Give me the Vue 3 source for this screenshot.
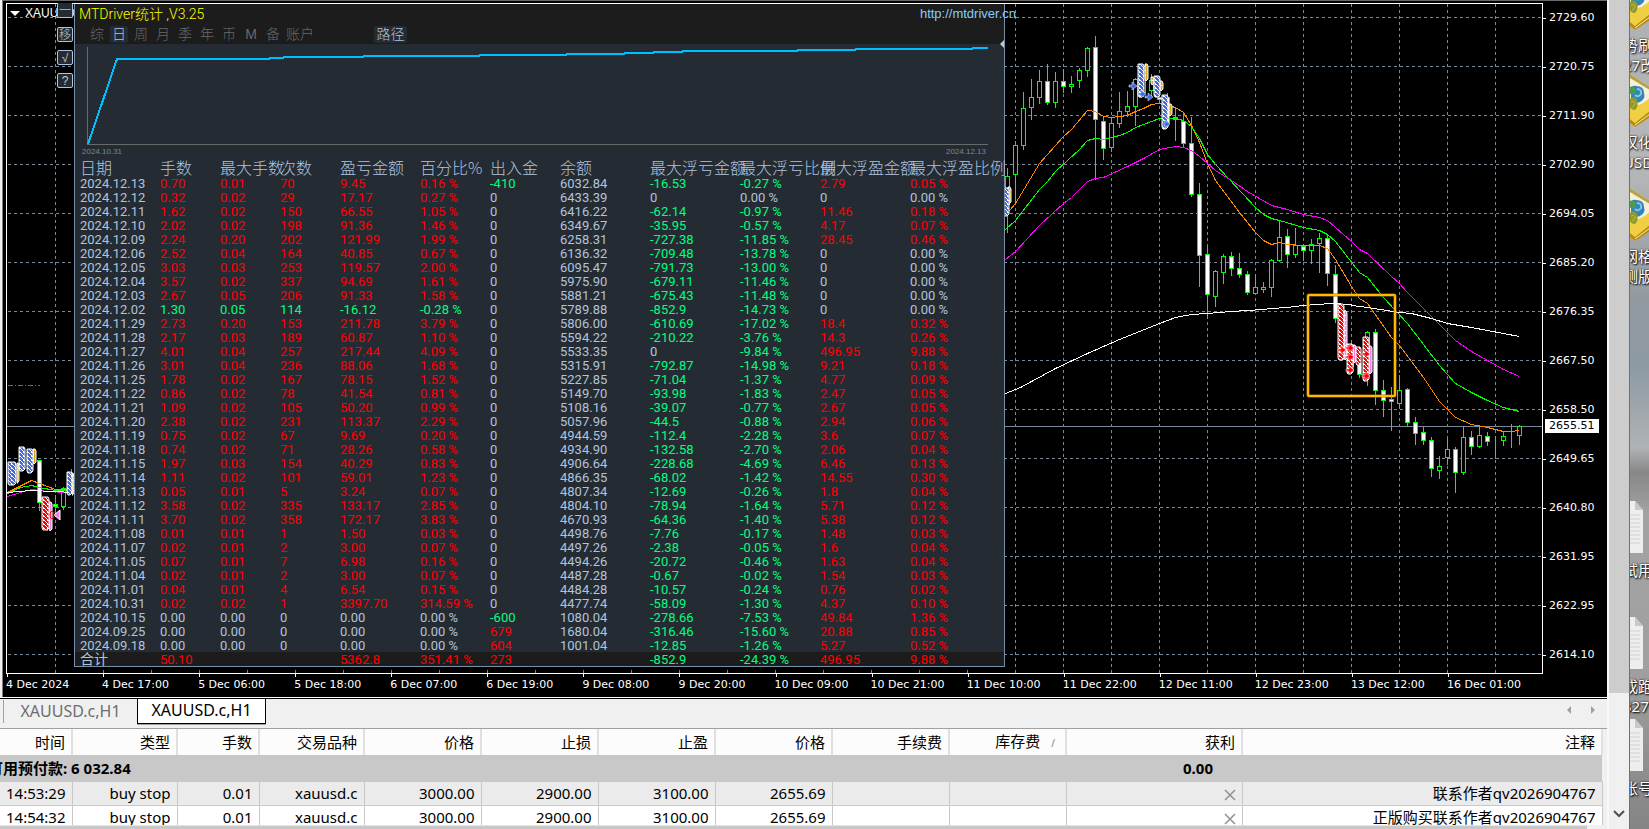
<script setup>
const headers = ['日期', '手数', '最大手数', '次数', '盈亏金额', '百分比%', '出入金', '余额', '最大浮亏金额', '最大浮亏比例', '最大浮盈金额', '最大浮盈比例']
const rows = `2024.12.13|0.70|0.01|70|9.45|0.16|-410|6032.84|-16.53|-0.27|2.79|0.05
2024.12.12|0.32|0.02|29|17.17|0.27|0|6433.39|0|0.00|0|0.00
2024.12.11|1.62|0.02|150|66.55|1.05|0|6416.22|-62.14|-0.97|11.46|0.18
2024.12.10|2.02|0.02|198|91.36|1.46|0|6349.67|-35.95|-0.57|4.17|0.07
2024.12.09|2.24|0.20|202|121.99|1.99|0|6258.31|-727.38|-11.85|28.45|0.46
2024.12.06|2.52|0.04|164|40.85|0.67|0|6136.32|-709.48|-13.78|0|0.00
2024.12.05|3.03|0.03|253|119.57|2.00|0|6095.47|-791.73|-13.00|0|0.00
2024.12.04|3.57|0.02|337|94.69|1.61|0|5975.90|-679.11|-11.46|0|0.00
2024.12.03|2.67|0.05|206|91.33|1.58|0|5881.21|-675.43|-11.48|0|0.00
2024.12.02|1.30|0.05|114|-16.12|-0.28|0|5789.88|-852.9|-14.73|0|0.00
2024.11.29|2.73|0.20|153|211.78|3.79|0|5806.00|-610.69|-17.02|18.4|0.32
2024.11.28|2.17|0.03|189|60.87|1.10|0|5594.22|-210.22|-3.76|14.3|0.26
2024.11.27|4.01|0.04|257|217.44|4.09|0|5533.35|0|-9.84|496.95|9.88
2024.11.26|3.01|0.04|236|88.06|1.68|0|5315.91|-792.87|-14.98|9.21|0.18
2024.11.25|1.78|0.02|167|78.15|1.52|0|5227.85|-71.04|-1.37|4.77|0.09
2024.11.22|0.86|0.02|78|41.54|0.81|0|5149.70|-93.98|-1.83|2.47|0.05
2024.11.21|1.09|0.02|105|50.20|0.99|0|5108.16|-39.07|-0.77|2.67|0.05
2024.11.20|2.38|0.02|231|113.37|2.29|0|5057.96|-44.5|-0.88|2.94|0.06
2024.11.19|0.75|0.02|67|9.69|0.20|0|4944.59|-112.4|-2.28|3.6|0.07
2024.11.18|0.74|0.02|71|28.26|0.58|0|4934.90|-132.58|-2.70|2.06|0.04
2024.11.15|1.97|0.03|154|40.29|0.83|0|4906.64|-228.68|-4.69|6.46|0.13
2024.11.14|1.11|0.02|101|59.01|1.23|0|4866.35|-68.02|-1.42|14.55|0.30
2024.11.13|0.05|0.01|5|3.24|0.07|0|4807.34|-12.69|-0.26|1.8|0.04
2024.11.12|3.58|0.02|335|133.17|2.85|0|4804.10|-78.94|-1.64|5.71|0.12
2024.11.11|3.70|0.02|358|172.17|3.83|0|4670.93|-64.36|-1.40|5.38|0.12
2024.11.08|0.01|0.01|1|1.50|0.03|0|4498.76|-7.76|-0.17|1.48|0.03
2024.11.07|0.02|0.01|2|3.00|0.07|0|4497.26|-2.38|-0.05|1.6|0.04
2024.11.05|0.07|0.01|7|6.98|0.16|0|4494.26|-20.72|-0.46|1.63|0.04
2024.11.04|0.02|0.01|2|3.00|0.07|0|4487.28|-0.67|-0.02|1.54|0.03
2024.11.01|0.04|0.01|4|6.54|0.15|0|4484.28|-10.57|-0.24|0.76|0.02
2024.10.31|0.02|0.02|1|3397.70|314.59|0|4477.74|-58.09|-1.30|4.37|0.10
2024.10.15|0.00|0.00|0|0.00|0.00|-600|1080.04|-278.66|-7.53|49.84|1.36
2024.09.25|0.00|0.00|0|0.00|0.00|679|1680.04|-316.46|-15.60|20.88|0.85
2024.09.18|0.00|0.00|0|0.00|0.00|604|1001.04|-12.85|-1.26|5.27|0.52`.split('\n').map((line) => line.split('|'))
const totals = ['合计', '50.10', '', '', '5362.8', '351.41', '273', '', '-852.9', '-24.39', '496.95', '9.88']
const percentColumns = [5, 9, 11]
const sign = (v) => (Number(v) > 0 ? 'up' : Number(v) < 0 ? 'down' : '')
function tone(row, i) {
  if (i === 0 || i === 7) return ''
  return i <= 5 ? sign(row[4]) : sign(row[i])
}
const show = (v, i) => (v !== '' && percentColumns.includes(i) ? v + ' %' : v)

const periods = ['综', '日', '周', '月', '季', '年', '币', 'M', '备', '账户']
const tools = ['一', '移', '√', '?']

const prices = ['2729.60', '2720.75', '2711.90', '2702.90', '2694.05', '2685.20', '2676.35', '2667.50', '2658.50', '2649.65', '2640.80', '2631.95', '2622.95', '2614.10']
const times = ['4 Dec 2024', '4 Dec 17:00', '5 Dec 06:00', '5 Dec 18:00', '6 Dec 07:00', '6 Dec 19:00', '9 Dec 08:00', '9 Dec 20:00', '10 Dec 09:00', '10 Dec 21:00', '11 Dec 10:00', '11 Dec 22:00', '12 Dec 11:00', '12 Dec 23:00', '13 Dec 12:00', '16 Dec 01:00']
const gridX = Array.from({ length: 31 }, (_, k) => 55 + 48 * k)
const gridY = Array.from({ length: 14 }, (_, k) => 17 + 49 * k)

// Series are stored in thirds of a pixel, relative to the origin of their block.
const third = (n, origin) => Math.round(n / 3 + origin)
const bars = (ox, oy, list) => list.map(([x, hi, lo, top, bottom, solid]) => {
  const cx = Math.floor(x / 3 + ox)
  const y = third(top, oy)
  return { cx: cx + 0.5, hi: third(hi, oy), lo: third(lo, oy), y, h: Math.max(0, third(bottom, oy) - y - 1), solid: !!solid }
})
const candles = [
  ...bars(1000, 0, [
    [22, 504, 698, 528, 616], [46, 424, 605, 436, 526], [70, 276, 450, 325, 437], [94, 237, 360, 292, 323],
    [118, 210, 312, 244, 293], [142, 192, 314, 244, 308, 1], [166, 216, 324, 244, 308], [190, 207, 280, 244, 260, 1],
    [214, 228, 279, 253, 260], [238, 205, 264, 211, 242], [262, 140, 231, 145, 212], [286, 108, 540, 142, 361, 1],
    [310, 348, 480, 363, 446, 1], [334, 350, 456, 370, 443], [358, 276, 384, 334, 371], [382, 272, 350, 319, 335],
    [406, 235, 378, 238, 320], [430, 200, 290, 210, 280], [454, 222, 290, 240, 272], [478, 240, 308, 290, 300, 1],
    [502, 280, 384, 290, 370, 1], [526, 322, 423, 352, 361, 1], [550, 337, 443, 363, 431, 1], [574, 352, 591, 430, 584, 1],
    [598, 549, 861, 583, 767, 1], [622, 737, 957, 763, 884, 1], [646, 810, 921, 814, 890], [670, 762, 852, 769, 818],
    [694, 755, 828, 769, 806, 1], [718, 759, 834, 804, 824, 1], [742, 814, 885, 822, 878, 1], [766, 822, 882, 862, 881],
    [790, 846, 879, 862, 869], [814, 777, 891, 781, 863], [838, 660, 785, 712, 782], [862, 686, 804, 709, 764, 1],
    [886, 684, 775, 735, 764], [910, 732, 783, 737, 754, 1], [934, 717, 793, 733, 752], [958, 699, 820, 715, 733],
    [982, 702, 858, 715, 821, 1]
  ]),
  ...bars(1280, 180, [
    [166, 255, 428, 283, 416, 1], [190, 374, 540, 390, 530, 1], [214, 480, 580, 500, 560], [238, 545, 595, 550, 584, 1],
    [262, 453, 618, 457, 560], [286, 447, 675, 457, 632, 1], [310, 600, 711, 631, 662, 1], [334, 620, 753, 658, 665, 1],
    [358, 586, 683, 631, 671], [382, 624, 738, 628, 728, 1], [406, 711, 795, 727, 761, 1], [430, 741, 796, 757, 782, 1],
    [454, 771, 891, 781, 866, 1], [478, 828, 897, 859, 872], [502, 777, 856, 808, 833], [526, 800, 939, 808, 878, 1],
    [550, 738, 885, 772, 878], [574, 753, 825, 771, 800, 1], [598, 737, 803, 766, 801], [622, 757, 797, 769, 785, 1],
    [646, 769, 838, 784, 784], [670, 752, 797, 769, 784], [694, 732, 803, 769, 769], [718, 735, 795, 739, 767]
  ]),
  ...bars(0, 400, [[118, 180, 332, 181, 310, 1], [166, 284, 352, 313, 320, 1], [190, 262, 330, 265, 322], [214, 207, 270, 230, 260], [142, 300, 392, 310, 360, 1]])
]
const pts = (ox, oy, flat) => {
  const out = []
  for (let i = 0; i < flat.length; i += 2) out.push(`${third(flat[i], ox)}.5,${third(flat[i + 1], oy)}.5`)
  return out.join(' ')
}
const averages = [
  { color: '#ff8c00', points: pts(1000, 0, [14, 645, 46, 608, 118, 490, 190, 407, 214, 387, 262, 329, 286, 333, 310, 347, 334, 352, 382, 346, 406, 332, 430, 325, 454, 312, 478, 310, 526, 322, 550, 337, 574, 375, 598, 425, 622, 490, 646, 540, 718, 635, 766, 697, 790, 720, 814, 731, 838, 727, 862, 733, 910, 736, 958, 734]) + ' ' + pts(1280, 180, [142, 205, 166, 237, 214, 318, 238, 354, 262, 370, 334, 472, 358, 495, 430, 590, 478, 663, 502, 686, 526, 711, 574, 732, 622, 742, 670, 752, 694, 754, 718, 750]) },
  { color: '#00ff00', points: pts(1000, 0, [14, 687, 46, 660, 118, 568, 142, 543, 166, 514, 238, 446, 262, 419, 286, 415, 310, 418, 334, 412, 358, 406, 382, 397, 406, 382, 454, 363, 478, 355, 526, 355, 550, 359, 574, 377, 598, 414, 622, 462, 646, 493, 766, 620, 790, 641, 814, 654, 838, 661, 910, 681, 958, 690]) + ' ' + pts(1280, 180, [142, 162, 166, 184, 238, 277, 262, 291, 310, 350, 382, 430, 430, 491, 478, 555, 526, 608, 574, 636, 622, 659, 670, 682, 694, 687, 718, 693]) },
  { color: '#ff00ff', points: pts(1000, 0, [14, 776, 46, 754, 118, 676, 190, 608, 214, 590, 262, 544, 286, 535, 310, 530, 382, 499, 430, 473, 478, 448, 526, 438, 550, 440, 574, 450, 598, 469, 622, 490, 646, 510, 694, 540, 742, 573, 814, 616, 862, 627, 910, 643, 958, 652]) + ' ' + pts(1280, 180, [142, 121, 214, 182, 238, 206, 262, 219, 334, 288, 358, 308, 382, 335, 454, 408, 526, 481, 574, 512, 622, 541, 670, 566, 718, 589]) },
  { color: '#ffffff', points: pts(1000, 0, [14, 1178, 60, 1160, 165, 1105, 262, 1060, 358, 1018, 478, 970, 526, 952, 574, 941, 622, 938, 694, 932, 790, 928, 814, 923, 862, 920, 910, 915, 990, 910, 1050, 912]) + ' ' + pts(1280, 180, [215, 376, 262, 380, 358, 395, 394, 399, 454, 415, 502, 428, 574, 441, 718, 467]) },
  { color: '#ff8c00', points: pts(0, 400, [22, 275, 94, 241, 118, 248, 166, 268, 222, 267]) },
  { color: '#00ff00', points: pts(0, 400, [22, 278, 60, 262, 94, 256, 118, 260, 166, 270, 222, 270]) },
  { color: '#ff00ff', points: pts(0, 400, [22, 287, 60, 275, 94, 268, 140, 274, 196, 276]) },
  { color: '#ffffff', points: pts(0, 400, [22, 276, 94, 270, 222, 276]) }
]
const mark = (ox, oy, kind, x1, y1, x2, y2) => ({ kind, x: third(x1, ox), y: third(y1, oy), w: third(x2 - x1, 0), h: third(y2 - y1, 0) })
const stacks = [
  mark(1000, 0, 'gold', 22, 561, 35, 612), mark(1000, 0, 'blue', 8, 565, 26, 650),
  mark(1000, 0, 'gold', 433, 193, 444, 245), mark(1000, 0, 'blue', 412, 192, 434, 292),
  mark(1000, 0, 'gold', 450, 232, 461, 255), mark(1000, 0, 'gold', 478, 243, 491, 272),
  mark(1000, 0, 'blue', 458, 229, 480, 292), mark(1000, 0, 'gold', 504, 313, 516, 350),
  mark(1000, 0, 'blue', 484, 284, 506, 385),
  mark(1280, 180, 'violet', 190, 394, 203, 540), mark(1280, 180, 'red', 172, 372, 193, 541),
  mark(1280, 180, 'violet', 216, 495, 228, 548), mark(1280, 180, 'red', 197, 493, 218, 583),
  mark(1280, 180, 'red', 224, 500, 242, 555), mark(1280, 180, 'violet', 264, 498, 276, 583),
  mark(1280, 180, 'red', 245, 472, 266, 605),
  mark(0, 400, 'gold', 48, 190, 58, 250), mark(0, 400, 'blue', 22, 185, 48, 255),
  mark(0, 400, 'blue', 54, 140, 75, 212), mark(0, 400, 'gold', 96, 148, 108, 192),
  mark(0, 400, 'blue', 78, 146, 98, 218), mark(0, 400, 'violet', 145, 306, 156, 392),
  mark(0, 400, 'red', 124, 292, 147, 392), mark(0, 400, 'gold', 214, 218, 224, 283), mark(0, 400, 'blue', 197, 215, 216, 283)
]
const tips = [
  { x: 1129, y: 86, color: '#4169e1' }, { x: 1145, y: 97, color: '#4169e1' },
  { x: 1138, y: 94, color: '#4169e1' }, { x: 1162, y: 124, color: '#4169e1' },
  { x: 1346, y: 348, color: '#ff0000' }, { x: 1346, y: 357, color: '#ff0000' }, { x: 1346, y: 370, color: '#ff0000' },
  { x: 1362, y: 354, color: '#ff0000' }, { x: 1362, y: 376, color: '#ff0000' }, { x: 1338, y: 350, color: '#ff0000' }
]

const orderHeads = ['时间', '类型', '手数', '交易品种', '价格', '止损', '止盈', '价格', '手续费', '库存费', '获利', '注释']
const orders = [
  ['14:53:29', 'buy stop', '0.01', 'xauusd.c', '3000.00', '2900.00', '3100.00', '2655.69', '', '', '×', '联系作者qv2026904767'],
  ['14:54:32', 'buy stop', '0.01', 'xauusd.c', '3000.00', '2900.00', '3100.00', '2655.69', '', '', '×', '正版购买联系作者qv2026904767']
]
const shortcuts = [
  { kind: 'book', lines: ['势刷', '27改'] },
  { kind: 'book', lines: ['汉化', 'USD'] },
  { kind: 'book', lines: ['网格', '测版'] },
  { kind: 'gap', lines: [] },
  { kind: 'doc', lines: ['试用'] },
  { kind: 'doc', lines: ['成跑', '327'] },
  { kind: 'doc', lines: ['账号'] }
]
</script>

<template>
  <div class="screen">
    <main class="terminal">
      <section class="chart">
        <div class="plot">
          <svg class="canvas" viewBox="7 4 1535 669" preserveAspectRatio="none" aria-label="XAUUSD.c H1">
            <defs>
              <pattern id="blue" width="4" height="4" patternUnits="userSpaceOnUse"><rect width="4" height="4" fill="#4169e1" /><path d="M0 0h1v1h-1zM1 1h1v1h-1zM2 2h1v1h-1zM3 3h1v1h-1zM3 0h1v1h-1z" fill="#fff" /></pattern>
              <pattern id="red" width="4" height="4" patternUnits="userSpaceOnUse"><rect width="4" height="4" fill="#f00" /><path d="M0 0h1v1h-1zM1 1h1v1h-1zM2 2h1v1h-1zM3 3h1v1h-1zM3 0h1v1h-1z" fill="#fff" /></pattern>
              <pattern id="gold" width="4" height="5" patternUnits="userSpaceOnUse"><rect width="4" height="5" fill="#daa520" /><path d="M0 0h2v1h-2z" fill="#fff" /></pattern>
              <pattern id="violet" width="4" height="5" patternUnits="userSpaceOnUse"><rect width="4" height="5" fill="#ee82ee" /><path d="M0 0h2v1h-2z" fill="#fff" /></pattern>
            </defs>
            <g class="grid">
              <line v-for="x in gridX" :key="'x' + x" :x1="x + 0.5" :x2="x + 0.5" y1="4" y2="673" />
              <line v-for="y in gridY" :key="'y' + y" x1="8" x2="1542" :y1="y + 0.5" :y2="y + 0.5" />
            </g>
            <line x1="7" x2="1542" y1="426.5" y2="426.5" stroke="#778899" />
            <line x1="8" x2="40" y1="385.5" y2="385.5" stroke="#4169e1" stroke-dasharray="5 2 1 2" />
            <g v-for="(c, i) in candles" :key="i" class="candle">
              <line :x1="c.cx" :x2="c.cx" :y1="c.hi" :y2="c.lo" />
              <rect :x="c.cx - 2" :y="c.y + 0.5" width="4" :height="c.h" :class="{ solid: c.solid }" />
            </g>
            <polyline v-for="(a, i) in averages" :key="'a' + i" :points="a.points" :stroke="a.color" fill="none" shape-rendering="crispEdges" />
            <g v-for="(s, i) in stacks" :key="'s' + i">
              <path :d="`M${s.x + 1} ${s.y}h${s.w - 2}l1 2v${s.h - 4}l-2 2h${4 - s.w}l-1 -2v${4 - s.h}z`" :fill="`url(#${s.kind})`" stroke="#fff" />
            </g>
            <path v-for="(t, i) in tips" :key="'t' + i" :d="`M${t.x} ${t.y - 1}h3v-3l5 4l-5 4v-3h-3z`" :fill="t.color" stroke="#fff" stroke-width="0.5" />
            <path d="M60 510v10l-6 -5z" fill="#ee82ee" stroke="#fff" />
            <ellipse cx="52" cy="515" rx="2" ry="4" fill="none" stroke="#f00" />
            <rect x="1308" y="295" width="87" height="101" rx="1" fill="none" stroke="#9b6f00" stroke-width="3" />
            <rect x="1308" y="295" width="87" height="101" rx="1" fill="none" stroke="#ffb900" stroke-width="2" />
          </svg>
          <p class="symbol"><svg width="10" height="5" viewBox="0 0 10 5"><path d="M0 0h10l-5 5z" fill="#fff" /></svg>XAUUSD.c</p>
        </div>
        <div class="prices">
          <span v-for="p in prices" :key="p" class="price">{{ p }}</span>
          <strong class="current">2655.51</strong>
        </div>
        <div class="times"><span v-for="t in times" :key="t">{{ t }}</span></div>

        <div class="tools"><button v-for="t in tools" :key="t" type="button">{{ t }}</button></div>

        <div class="panel">
          <header class="top">
            <h1>MTDriver统计 ,V3.25</h1>
            <a href="http://mtdriver.cn">http://mtdriver.cn</a>
            <nav>
              <button v-for="p in periods" :key="p" type="button" :class="{ on: p === '日' }">{{ p }}</button>
              <button type="button" class="path on">路径</button>
            </nav>
          </header>
          <svg class="collapse" width="4" height="8" viewBox="0 0 4 8"><path d="M4 0v8l-4 -4z" fill="#c8c8c8" /></svg>
          <svg class="equity" viewBox="75 44 929 104" preserveAspectRatio="none">
            <path d="M87.500 47V144.500H988" fill="none" stroke="#696969" />
            <polyline points="88,144 117,59 269,59 270,58 283,58 284,57 363,57 364,56 479,56 480,55 566,55 567,54 624,54 625,53 653,53 654,52 682,52 683,51 797,51 798,50 855,50 856,49 972,49 973,48 988,48" fill="none" stroke="#00bfff" stroke-width="2" />
          </svg>
          <div class="range"><span>2024.10.31</span><span>2024.12.13</span></div>
          <table class="stats">
            <colgroup><col v-for="(h, i) in headers" :key="i" :class="'c' + i" /></colgroup>
            <thead><tr><th v-for="h in headers" :key="h" scope="col">{{ h }}</th></tr></thead>
            <tbody>
              <tr v-for="r in rows" :key="r[0]"><td v-for="(v, i) in r" :key="i" :class="tone(r, i)">{{ show(v, i) }}</td></tr>
            </tbody>
            <tfoot><tr><td v-for="(v, i) in totals" :key="i" :class="tone(totals, i)">{{ show(v, i) }}</td></tr></tfoot>
          </table>
        </div>
      </section>

      <nav class="tabs">
        <button type="button">XAUUSD.c,H1</button>
        <button type="button" class="active">XAUUSD.c,H1</button>
        <svg width="30" height="10" viewBox="0 0 30 10"><path d="M4 1v8l-4 -4zM24 1v8l4 -4z" fill="#a0a0a0" /></svg>
      </nav>

      <section class="orders">
        <table>
          <colgroup><col v-for="(h, i) in orderHeads" :key="i" :class="'o' + i" /></colgroup>
          <thead><tr><th v-for="(h, i) in orderHeads" :key="i" scope="col">{{ h }}<span v-if="i === 9" class="sort">/</span></th></tr></thead>
          <tbody>
            <tr class="balance"><td colspan="10"><span>可用预付款: 6 032.84</span></td><td class="sum">0.00</td><td></td></tr>
            <tr v-for="o in orders" :key="o[0]">
              <td v-for="(v, i) in o" :key="i">
                <button v-if="i === 10" type="button" class="close" aria-label="关闭"><svg width="12" height="12" viewBox="0 0 12 12"><path d="M1 1l10 10M11 1l-10 10" stroke="#909090" stroke-width="1.500" /></svg></button>
                <template v-else>{{ v }}</template>
              </td>
            </tr>
          </tbody>
        </table>
      </section>
      <div class="foot"></div>
    </main>
    <aside class="scroll"><div class="thumb"></div><svg width="12" height="8" viewBox="0 0 12 8"><path d="M1 1l5 5l5 -5" fill="none" stroke="#505050" stroke-width="2" /></svg></aside>
    <aside class="desktop">
      <div v-for="(s, i) in shortcuts" :key="i" :class="['shortcut', s.kind]">
        <svg v-if="s.kind === 'book'" width="20" height="56" viewBox="0 0 20 56">
          <path d="M0 1L20 14V42L5 54L0 50z" fill="#f5f0d8" />
          <path d="M0 1L20 14V17L0 5z" fill="#b9a04a" />
          <path d="M0 32Q12 34 20 24V40L5 50L0 46z" fill="#f0cf43" />
          <path d="M0 46L5 50L20 38V44L5 54L0 50z" fill="#b88a10" />
          <path d="M5 52L20 41" stroke="#fff0a0" fill="none" />
          <path d="M1 18q0 -6 5 -5q8 0 8 7q2 6 -4 9q-5 2 -9 -3z" fill="#2f86b8" />
          <path d="M0 14q4 -2 6 2q1 4 -3 5h-3z" fill="#4d9b50" />
          <path d="M7 16q5 0 4 5q-3 4 -6 1" fill="none" stroke="#8cc3dc" stroke-width="2" />
          <path d="M0 26q4 -4 7 1q2 6 -2 10q-4 0 -5 -3z" fill="#8f9a2d" />
          <path d="M1 29q3 -2 4 1q0 3 -3 4" fill="none" stroke="#c7b441" />
        </svg>
        <svg v-else-if="s.kind === 'doc'" width="20" height="52" viewBox="0 0 20 52">
          <path d="M0 0H5L13 9V52H0z" fill="#eee" /><path d="M5 0L13 9H5z" fill="#c8c8c8" />
          <path d="M0 14h10M0 18h10M0 22h10M0 26h10M0 30h10M0 34h10M0 38h10M0 42h10" stroke="#d2d2d2" />
        </svg>
        <span v-for="l in s.lines" :key="l">{{ l }}</span>
      </div>
    </aside>
  </div>
</template>

<style>
body { margin: 0; overflow: hidden; background: #f0f0f0; }
</style>

<style scoped>
* { box-sizing: border-box; }
button { margin: 0; padding: 0; border: 0; background: none; font: inherit; color: inherit; }
.screen { display: grid; grid-template-columns: minmax(0, 1fr) 20px 20px; height: 100vh; font-family: "Noto Sans", "Noto Sans CJK SC", sans-serif; }
.terminal { display: flex; flex-direction: column; min-width: 0; min-height: 0; border-right: 2px solid #f8f8f8; }
.chart { position: relative; flex: 1; min-height: 0; margin-left: 2px; display: grid; grid-template: minmax(0, 1fr) 23px / minmax(0, 1fr) 64px; padding: 2px 0 0 3px; background: #000; border-left: 1px solid #808080; border-top: 1px solid #696969; color: #fff; font: 11px/14px "DejaVu Sans", sans-serif; }
.plot { position: relative; border: 1px solid #fff; min-height: 0; }
.canvas { display: block; width: 100%; height: 100%; }
.grid line { stroke: #778899; stroke-dasharray: 3 3; shape-rendering: crispEdges; }
.candle { stroke: #00ff00; fill: #000; shape-rendering: crispEdges; }
.candle .solid { fill: #fff; }
.symbol { position: absolute; left: 3px; top: 2px; margin: 0; display: flex; align-items: center; gap: 5px; font-family: "Liberation Sans", sans-serif; font-size: 12px; }
.prices { position: relative; display: flex; flex-direction: column; justify-content: space-between; padding: 8px 0 12px; }
.price { display: flex; align-items: center; gap: 3px; }
.price::before { content: ""; width: 3px; border-top: 1px solid #fff; }
.current { position: absolute; top: 62%; left: 2px; width: 54px; padding-left: 4px; background: #fff; color: #000; font-weight: 400; }
.times { grid-column: 1; display: grid; grid-template-columns: repeat(16, minmax(0, 1fr)); white-space: nowrap; }
.times span { position: relative; padding-top: 4px; }
.times span::before { content: ""; position: absolute; top: 0; left: 1px; width: 1px; height: 3px; background: #fff; }

.tools { position: absolute; left: 54px; top: 2px; display: flex; flex-direction: column; gap: 8px; }
.tools button { width: 16px; height: 15px; border: 1px solid #b0c4de; border-radius: 2px; background: #252b33; color: #c8c8c8; font: 300 12px/12px "Liberation Sans", "Noto Sans CJK SC", sans-serif; overflow: hidden; }
.tools button:first-child { border-top-color: #252b33; line-height: 8px; margin-bottom: 1px; color: #fff; }

.panel { position: absolute; left: 71px; top: 3px; width: 931px; border: 1px solid #778fa8; border-top: 0; background: #252b33; color: #b0c4de; font: 13px/14px Roboto, "Liberation Sans", "Noto Sans CJK SC", sans-serif; }
.top { position: relative; display: flex; flex-wrap: wrap; justify-content: space-between; height: 40px; background: #1c1c1c; padding-left: 4px; }
.top h1 { margin: 0; color: #ff0; font: 300 14px/20px Roboto, "Noto Sans CJK SC", sans-serif; }
.top a { margin-right: -12px; color: #87cefa; font: 13px/20px "Liberation Sans", sans-serif; text-decoration: none; z-index: 1; }
.top nav { width: 100%; display: flex; gap: 4px; padding-left: 9px; color: #696969; font: 300 14px/16px "Liberation Sans", "Noto Sans CJK SC", sans-serif; }
.top nav button { min-width: 18px; height: 17px; border-radius: 2px; }
.top nav .on { background: #252b33; color: #b0c4de; }
.top nav .path { width: 33px; margin-left: 56px; }
.collapse { position: absolute; right: 0; top: 36px; }
.equity { display: block; width: 100%; height: 104px; shape-rendering: crispEdges; }
.range { display: flex; justify-content: space-between; height: 12px; padding: 0 18px 0 7px; color: #778899; font: 8px/8px "Liberation Sans", sans-serif; }
.stats { width: 100%; table-layout: fixed; border-collapse: collapse; white-space: nowrap; }
.stats th { height: 16px; padding: 0 0 2px; text-align: left; font: 300 16px/14px "Noto Sans CJK SC", sans-serif; }
.stats td { height: 14px; padding: 1px 0 0; line-height: 13px; }
.stats tr > :first-child { padding-left: 5px; }
.stats tfoot { background: #1c1c1c; }
.stats tfoot td:first-child { font-size: 14px; }
.up { color: #f00; }
.down { color: #00ff7f; }
.c0 { width: 85px; } .c1, .c2, .c3 { width: 60px; } .c4, .c9 { width: 80px; } .c5, .c6 { width: 70px; } .c7, .c8, .c10 { width: 90px; }

.tabs { display: flex; height: 32px; border-top: 1px solid #fff; background: #f0f0f0; color: #6d6d6d; font-size: 16px; line-height: 20px; padding-left: 3px; box-shadow: inset 0 1px #000; border-bottom: 1px solid #a0a0a0; position: relative; }
.tabs button { width: 134px; height: 23px; margin-top: 2px; border-left: 1px solid #a0a0a0; padding: 0 0 2px; }
.tabs .active { width: 129px; height: 25px; margin-top: 1px; border: 1px solid #000; border-top: 0; background: #fff; color: #000; box-shadow: 0 1px #a0a0a0; }
.tabs svg { margin: 7px 10px 0 auto; }

.orders { height: 96px; overflow: hidden; padding-right: 4px; background: #f0f0f0; color: #000; }
.orders table { width: 100%; table-layout: fixed; border-collapse: collapse; white-space: nowrap; font-size: 15px; line-height: 20px; }
.orders th, .orders td { padding: 0 6px; text-align: right; font-weight: 400; border-right: 1px solid #c8c8c8; }
.orders th { height: 26px; background: #fcfcfc; border-right: 2px solid #e0e0e0; }
.orders td { height: 24px; }
.orders tbody tr { background: #fff; border-bottom: 1px solid #c8c8c8; }
.orders tbody tr:nth-child(2) { background: #ebebeb; }
.orders tbody .balance { background: #c8c8c8; }
.orders .balance td { height: 26px; padding: 0; font-weight: 700; text-align: left; border: 0; overflow: hidden; }
.balance span { margin-left: -12px; }
.orders .balance .sum { text-align: right; padding-right: 29px; }
.sort { padding: 0 4px 0 11px; font-size: 10px; color: #808080; }
.close { display: inline-block; height: 12px; line-height: 0; vertical-align: middle; }
.o0 { width: 72px; } .o1 { width: 105px; } .o2 { width: 82px; } .o3 { width: 105px; } .o4, .o5, .o6, .o7, .o8, .o9 { width: 117px; } .o10 { width: 176px; }
.foot { height: 4px; margin-right: 20px; background: #c8c8c8; border-top: 1px solid #e4e4e4; }

.scroll { display: flex; flex-direction: column; align-items: center; background: #f0f0f0; }
.thumb { width: 100%; flex: 1; background: #cdcdcd; margin-bottom: 117px; }
.scroll svg { margin-bottom: 11px; }

.desktop { display: flex; flex-direction: column; overflow: hidden; border-left: 1px solid #707070; background: linear-gradient(#aeb0b1, #b6b7b8 20%, #929aa0 36%, #8d99a3 44%, #b0b3b5 54%, #878787 57%, #a3a3a3 62%, #a0a0a0 80%, #858585); color: #fff; font: 15px/20px "Noto Sans", "Noto Sans CJK SC", sans-serif; text-shadow: 1px 1px 2px #000, 0 0 2px #000; }
.shortcut { display: flex; flex-direction: column; white-space: nowrap; height: 102px; flex: none; }
.shortcut span { margin-left: -7px; }
.shortcut svg { flex: none; margin-bottom: 3px; }
.shortcut.book { height: 114px; padding-top: 2px; }
.shortcut.book:first-child { height: 71px; }
.shortcut.book:first-child svg { margin-top: -26px; }
.shortcut.gap { height: 202px; }
.shortcut.doc:nth-child(5) { height: 116px; }
.shortcut.doc svg { margin-bottom: 7px; }
</style>
